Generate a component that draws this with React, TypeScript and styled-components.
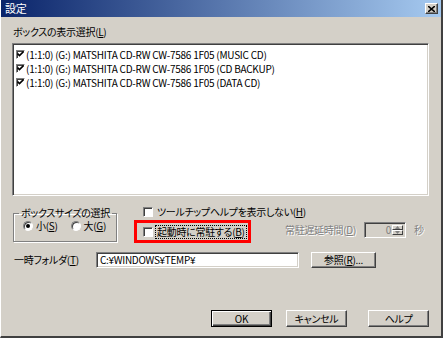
import React from 'react';
import styled, { createGlobalStyle } from 'styled-components';

const GlobalStyle = createGlobalStyle`
  html, body {
    margin: 0;
    padding: 0;
    background: #d4d0c8;
  }
  * {
    box-sizing: border-box;
  }
`;

const FONT = `"Noto Sans CJK JP", "Liberation Sans", sans-serif`;

const drives = ['MUSIC CD', 'CD BACKUP', 'DATA CD'];

const App = () => {
  return (
    <>
      <GlobalStyle />
      <Window>
        <TitleBar>
          <TitleText>設定</TitleText>
          <CloseButton>
            <svg width="7" height="6" viewBox="0 0 7 6">
              <path d="M0 0 L7 6 M7 0 L0 6" stroke="#000" strokeWidth="1.6" />
            </svg>
          </CloseButton>
        </TitleBar>

        <Body>
          <Label>
            ボックスの表示選択(<u>L</u>)
          </Label>
          <ListBox>
            {drives.map((name) => (
              <ListItem key={name}>
                <CheckBox $size={9} $checked>
                  <CheckMark />
                </CheckBox>
                <span>(1:1:0) (G:) MATSHITA CD-RW CW-7586 1F05 ({name})</span>
              </ListItem>
            ))}
          </ListBox>

          <MiddleRow>
            <GroupBox>
              <Legend>ボックスサイズの選択</Legend>
              <RadioRow>
                <RadioLabel>
                  <Radio $checked />
                  <span>
                    小(<u>S</u>)
                  </span>
                </RadioLabel>
                <RadioLabel>
                  <Radio />
                  <span>
                    大(<u>G</u>)
                  </span>
                </RadioLabel>
              </RadioRow>
            </GroupBox>

            <OptionsColumn>
              <OptionRow>
                <CheckBox $size={10} />
                <span>
                  ツールチップヘルプを表示しない(<u>H</u>)
                </span>
              </OptionRow>
              <ResidentRow>
                <Highlight>
                  <CheckBox $size={10} />
                  <FocusText>
                    起動時に常駐する(<u>B</u>)
                  </FocusText>
                </Highlight>
                <DisabledText>
                  常駐遅延時間(<u>D</u>)
                </DisabledText>
                <SpinBox>
                  <SpinValue>0</SpinValue>
                  <SpinButtons>
                    <SpinArrow>
                      <svg width="5" height="3" viewBox="0 0 5 3">
                        <path d="M2.5 0 L5 3 L0 3 Z" fill="#808080" />
                      </svg>
                    </SpinArrow>
                    <SpinArrow>
                      <svg width="5" height="3" viewBox="0 0 5 3">
                        <path d="M0 0 L5 0 L2.5 3 Z" fill="#808080" />
                      </svg>
                    </SpinArrow>
                  </SpinButtons>
                </SpinBox>
                <DisabledText $gap={8}>秒</DisabledText>
              </ResidentRow>
            </OptionsColumn>
          </MiddleRow>

          <FolderRow>
            <FolderLabel>
              一時フォルダ(<u>T</u>)
            </FolderLabel>
            <TextInput>C:¥WINDOWS¥TEMP¥</TextInput>
            <PushButton $width={65} $height={16}>
              <span>
                参照(<u>R</u>)...
              </span>
            </PushButton>
          </FolderRow>

          <ButtonBar>
            <PushButton $default>OK</PushButton>
            <PushButton $gap={14}>キャンセル</PushButton>
            <PushButton $gap={21}>ヘルプ</PushButton>
          </ButtonBar>
        </Body>
      </Window>
    </>
  );
};

export default App;

const CheckMark = () => (
  <svg width="7" height="6" viewBox="0 0 7 6">
    <path d="M0.5 2.5 L2.5 4.6 L6.5 0.6" stroke="#000" strokeWidth="1.6" fill="none" />
  </svg>
);

const Window = styled.div`
  width: 443px;
  height: 338px;
  display: flex;
  flex-direction: column;
  background: #d4d0c8;
  border-left: 1px solid #ffffff;
  border-right: 2px solid #404040;
  border-bottom: 2px solid #404040;
  font-family: ${FONT};
  font-size: 10px;
  font-feature-settings: 'palt';
  letter-spacing: -0.3px;
  color: #000;
  overflow: hidden;

  u {
    text-decoration: underline;
    text-underline-offset: 1px;
  }
`;

const TitleBar = styled.div`
  height: 17px;
  flex-shrink: 0;
  display: flex;
  align-items: center;
  justify-content: space-between;
  padding: 0 3px 0 4px;
  background: linear-gradient(to right, #0a246a, #a6caf0);
`;

const TitleText = styled.span`
  color: #ffffff;
  font-size: 11px;
  line-height: 13px;
`;

const CloseButton = styled.div`
  width: 13px;
  height: 11px;
  display: flex;
  align-items: center;
  justify-content: center;
  background: #d4d0c8;
  border: 1px solid;
  border-color: #ffffff #404040 #404040 #ffffff;
  box-shadow: inset -1px -1px #808080;
`;

const Body = styled.div`
  flex: 1;
  display: flex;
  flex-direction: column;
  padding: 9px 12px 9px 11px;
`;

const Label = styled.div`
  line-height: 12px;
  height: 12px;
  padding-left: 1px;
`;

const ListBox = styled.div`
  margin-top: 5px;
  height: 153px;
  background: #ffffff;
  border: 1px solid;
  border-color: #808080 #ffffff #ffffff #808080;
  box-shadow: inset 1px 1px #404040, inset -1px -1px #d4d0c8;
  padding: 3px 2px;
  display: flex;
  flex-direction: column;
`;

const ListItem = styled.div`
  height: 14px;
  display: flex;
  align-items: center;
  gap: 1px;
  padding-left: 1px;
  white-space: nowrap;
  letter-spacing: -0.25px;
`;

const CheckBox = styled.div<{ $size: number; $checked?: boolean }>`
  width: ${(p) => p.$size}px;
  height: ${(p) => p.$size}px;
  flex-shrink: 0;
  display: flex;
  align-items: center;
  justify-content: center;
  background: #ffffff;
  border: 1px solid;
  border-color: #808080 #ffffff #ffffff #808080;
  box-shadow: inset 1px 1px #404040;
`;

const MiddleRow = styled.div`
  margin-top: 11px;
  display: flex;
  align-items: flex-start;
`;

const GroupBox = styled.fieldset`
  margin: 0 0 0 1px;
  width: 104px;
  height: 35px;
  padding: 1px 0 0 9px;
  border: 1px solid #808080;
  box-shadow: inset 1px 1px #ffffff, 1px 1px #ffffff;
`;

const Legend = styled.legend`
  padding: 0 2px;
  margin-left: -4px;
  line-height: 12px;
  font-size: 10px;
`;

const RadioRow = styled.div`
  display: flex;
  align-items: center;
  gap: 13px;
`;

const RadioLabel = styled.label`
  display: flex;
  align-items: center;
  gap: 3px;
  line-height: 12px;
  white-space: nowrap;
`;

const Radio = styled.span<{ $checked?: boolean }>`
  width: 10px;
  height: 10px;
  flex-shrink: 0;
  border-radius: 50%;
  display: flex;
  align-items: center;
  justify-content: center;
  background: #ffffff;
  border: 1px solid;
  border-color: #808080 #ffffff #ffffff #808080;
  box-shadow: inset 1px 1px #404040;

  &::after {
    content: '';
    width: 4px;
    height: 4px;
    border-radius: 50%;
    background: ${(p) => (p.$checked ? '#000' : 'transparent')};
  }
`;

const OptionsColumn = styled.div`
  margin-left: 17px;
  margin-top: -1px;
  display: flex;
  flex-direction: column;
  gap: 2px;
`;

const OptionRow = styled.div`
  height: 12px;
  display: flex;
  align-items: center;
  gap: 4px;
  padding-left: 9px;
  white-space: nowrap;
  line-height: 12px;
`;

const ResidentRow = styled.div`
  display: flex;
  align-items: center;
  white-space: nowrap;
`;

const Highlight = styled.div`
  width: 117px;
  height: 23px;
  display: flex;
  align-items: center;
  gap: 3px;
  padding-left: 6px;
  border: 3px solid #ff0000;
`;

const FocusText = styled.span`
  line-height: 12px;
  padding: 0 1px;
  outline: 1px dotted #000;
`;

const DisabledText = styled.span<{ $gap?: number }>`
  margin-left: ${(p) => p.$gap ?? 34}px;
  color: #808080;
  text-shadow: 1px 1px #ffffff;
  line-height: 12px;
  margin-top: -3px;
`;

const SpinBox = styled.div`
  margin-left: 8px;
  margin-top: -3px;
  width: 42px;
  height: 16px;
  display: flex;
  align-items: stretch;
  border: 1px solid;
  border-color: #808080 #ffffff #ffffff #808080;
  box-shadow: inset 1px 1px #404040, inset -1px -1px #d4d0c8;
  padding: 2px;
`;

const SpinValue = styled.span`
  flex: 1;
  text-align: right;
  color: #808080;
  line-height: 10px;
  padding-right: 1px;
`;

const SpinButtons = styled.div`
  width: 11px;
  display: flex;
  flex-direction: column;
`;

const SpinArrow = styled.div`
  flex: 1;
  display: flex;
  align-items: center;
  justify-content: center;
  border: 1px solid;
  border-color: #ffffff #404040 #404040 #ffffff;
`;

const FolderRow = styled.div`
  margin-top: 9px;
  display: flex;
  align-items: center;
`;

const FolderLabel = styled.span`
  width: 84px;
  padding-left: 2px;
  line-height: 12px;
`;

const TextInput = styled.div`
  width: 203px;
  height: 16px;
  display: flex;
  align-items: center;
  padding: 0 3px;
  background: #ffffff;
  border: 1px solid;
  border-color: #808080 #ffffff #ffffff #808080;
  box-shadow: inset 1px 1px #404040, inset -1px -1px #d4d0c8;
  line-height: 12px;
`;

const PushButton = styled.div<{ $width?: number; $height?: number; $gap?: number; $default?: boolean }>`
  width: ${(p) => p.$width ?? 61}px;
  height: ${(p) => p.$height ?? 17}px;
  margin-left: ${(p) => p.$gap ?? 12}px;
  display: flex;
  align-items: center;
  justify-content: center;
  background: #d4d0c8;
  line-height: 12px;
  border: 1px solid;
  border-color: ${(p) => (p.$default ? '#000' : '#ffffff #404040 #404040 #ffffff')};
  box-shadow: ${(p) =>
    p.$default
      ? 'inset 1px 1px #ffffff, inset -1px -1px #404040, inset -2px -2px #808080'
      : 'inset -1px -1px #808080'};
`;

const ButtonBar = styled.div`
  margin-top: auto;
  display: flex;
  justify-content: flex-end;
`;
